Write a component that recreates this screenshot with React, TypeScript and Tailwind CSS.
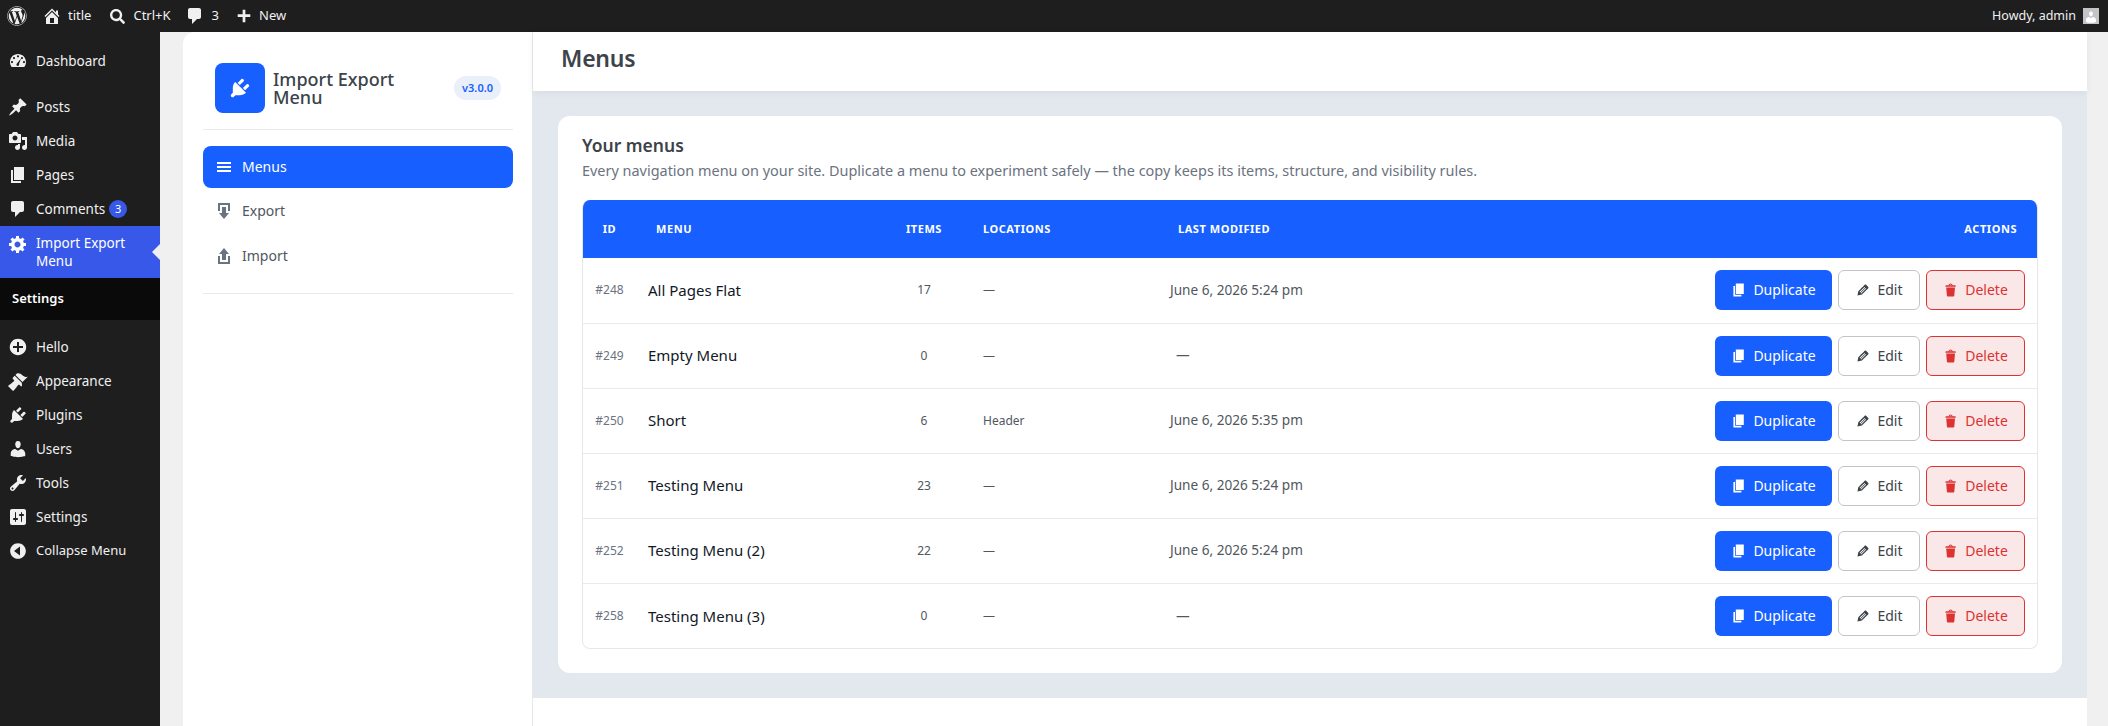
import React from 'react';
import { FaWordpress, FaSearch } from 'react-icons/fa';

type IconProps = { className?: string };

const makeIcon = (d: string) => ({ className }: IconProps) => (
  <svg viewBox="0 0 20 20" className={className} fill="currentColor" fillRule="evenodd">
    <path d={d} />
  </svg>
);

const HomeIcon = makeIcon('M16 8.500l1.530 1.530-1.060 1.060L10 4.620l-6.470 6.470-1.060-1.060L10 2.500l4 4v-2h2v4zm-6-2.460l6 5.990V18H4v-5.970zM12 17v-5H8v5h4z');
const CommentIcon = makeIcon('M5 2h9c1.100 0 2 .9 2 2v7c0 1.100-.9 2-2 2h-2l-5 5v-5H5c-1.100 0-2-.9-2-2V4c0-1.100.9-2 2-2z');
const PlusIcon = makeIcon('M17 7.500v3.500h-5.500V17h-3v-6H3V8h5.500V3h3v5H17z');
const DashboardIcon = makeIcon('M3.760 16h12.480c1.100-1.370 1.760-3.110 1.760-5 0-4.420-3.580-8-8-8s-8 3.580-8 8c0 1.890.66 3.630 1.760 5zM10 4.200a1.100 1.100 0 1 1 0 2.200 1.100 1.100 0 0 1 0-2.200zM6 6a1.100 1.100 0 1 1 0 2.200A1.100 1.100 0 0 1 6 6zm8 0a1.100 1.100 0 1 1 0 2.200A1.100 1.100 0 0 1 14 6zM4 10a1.100 1.100 0 1 1 0 2.200A1.100 1.100 0 0 1 4 10zm12 0a1.100 1.100 0 1 1 0 2.200 1.100 1.100 0 0 1 0-2.200zm-3-2.500l-2 5.500c.5.900-.1 2-1.200 2-1.200 0-1.800-1.200-1.100-2.200L13 7.500z');
const PostIcon = makeIcon('M10.440 3.020l1.820-1.820 6.360 6.350-1.830 1.820c-1.050-.68-2.480-.57-3.410.36l-.75.75c-.92.93-1.040 2.350-.35 3.410l-1.830 1.820-2.410-2.410-2.800 2.790c-.42.42-3.380 2.710-3.800 2.290s1.860-3.390 2.280-3.810l2.790-2.790L4.100 9.360l1.830-1.820c1.050.69 2.480.57 3.400-.36l.75-.75c.93-.92 1.050-2.350.36-3.410z');
const MediaIcon = makeIcon('M13 11V4c0-.55-.45-1-1-1h-1.670L9 1H5L3.670 3H2c-.55 0-1 .45-1 1v7c0 .55.45 1 1 1h10c.55 0 1-.45 1-1zM7 4.500c1.380 0 2.500 1.120 2.500 2.500S8.380 9.500 7 9.500 4.500 8.380 4.500 7 5.620 4.500 7 4.500zM14 6h5v10.500c0 1.380-1.120 2.500-2.500 2.500S14 17.880 14 16.500s1.120-2.500 2.500-2.500c.17 0 .34.020.5.050V9h-3V6zm-4 8.050V13h2v3.500c0 1.380-1.120 2.500-2.500 2.500S7 17.880 7 16.500 8.120 14 9.500 14c.17 0 .34.020.5.050z');
const PagesIcon = makeIcon('M6 15V2h10v13H6zm-1 1h8v2H3V5h2v11z');
const GearIcon = makeIcon('M18 12h-2.180c-.17.7-.44 1.350-.81 1.930l1.540 1.540-2.100 2.100-1.540-1.540c-.58.36-1.230.63-1.910.79V19H8v-2.180c-.68-.16-1.330-.43-1.910-.79l-1.540 1.540-2.120-2.120 1.540-1.540c-.36-.58-.63-1.230-.79-1.910H1V9.030h2.170c.16-.7.44-1.350.8-1.940L2.430 5.550l2.100-2.100 1.540 1.540c.58-.37 1.240-.64 1.930-.81V2h3v2.180c.68.16 1.330.43 1.910.79l1.540-1.540 2.120 2.120-1.540 1.540c.36.59.64 1.240.8 1.940H18V12zm-8.500 1.500c1.660 0 3-1.340 3-3s-1.340-3-3-3-3 1.340-3 3 1.340 3 3 3z');
const HelloIcon = makeIcon('M15.830 4.170c-3.220-3.220-8.440-3.220-11.660 0-3.220 3.220-3.220 8.440 0 11.660 3.220 3.220 8.440 3.220 11.660 0 3.220-3.220 3.220-8.440 0-11.660zM15 11h-4v4H9v-4H5V9h4V5h2v4h4v2z');
const AppearanceIcon = makeIcon('M14.480 11.060L7.410 3.990l1.500-1.500c.5-.56 2.300-.47 3.510.32 1.210.8 1.430 1.280 2.910 2.100 1.180.64 2.450 1.260 4.450.85zm-.71.71L6.700 4.700 4.930 6.470c-.39.39-.39 1.020 0 1.410l1.060 1.060c.39.39.39 1.030 0 1.420-.6.6-1.430 1.110-2.210 1.690-.35.26-.7.53-1.010.84C1.430 13.230 0 15 0 15l5 5s1.770-1.430 2.630-2.820c.31-.31.58-.66.84-1.010.58-.78 1.090-1.610 1.690-2.210.39-.39 1.030-.39 1.420 0l1.060 1.060c.39.39 1.020.39 1.410 0z');
const PluginIcon = makeIcon('M13.110 4.360L9.870 7.600 8 5.730l3.240-3.240c.35-.34 1.050-.2 1.560.32.52.51.66 1.210.31 1.550zm-8 1.770l.91-1.120 9.010 9.010-1.190.84c-.71.71-2.630 1.160-3.820 1.160H6.140L4.900 17.260c-.59.59-1.540.59-2.120 0-.59-.58-.59-1.530 0-2.120l1.240-1.240v-3.880c0-1.130.4-3.190 1.090-3.890zm7.260 3.970l3.240-3.240c.34-.35 1.040-.21 1.550.31.52.51.66 1.210.31 1.550l-3.240 3.250z');
const UsersIcon = makeIcon('M10 9.250c-2.270 0-2.730-3.440-2.730-3.440C7 4.020 7.820 2 9.970 2c2.160 0 2.980 2.020 2.710 3.810 0 0-.41 3.440-2.680 3.440zm0 2.570L12.720 10c2.390 0 4.520 2.330 4.520 4.530v2.490s-3.650 1.130-7.240 1.130c-3.650 0-7.240-1.130-7.240-1.130v-2.490c0-2.250 1.940-4.480 4.470-4.480z');
const ToolsIcon = makeIcon('M16.680 9.770c-1.340 1.340-3.300 1.670-4.950.99l-5.410 6.520c-.99.99-2.590.99-3.580 0s-.99-2.590 0-3.570l6.520-5.420c-.68-1.650-.35-3.610.99-4.950 1.280-1.280 3.120-1.620 4.720-1.060l-2.890 2.890 2.820 2.820 2.860-2.870c.53 1.580.18 3.390-1.080 4.650zM3.810 16.210c.4.39 1.040.39 1.430 0 .4-.4.4-1.040 0-1.430-.39-.4-1.030-.4-1.430 0-.39.39-.39 1.030 0 1.430z');
const SettingsIcon = makeIcon('M18 16V4c0-1.100-.9-2-2-2H4c-1.100 0-2 .9-2 2v12c0 1.100.9 2 2 2h12c1.100 0 2-.9 2-2zM8 11h1c.55 0 1 .45 1 1s-.45 1-1 1H8v1.500c0 .28-.22.5-.5.5s-.5-.22-.5-.5V13H6c-.55 0-1-.45-1-1s.45-1 1-1h1V5.500c0-.28.22-.5.5-.5s.5.22.5.5V11zm5-2h-1c-.55 0-1-.45-1-1s.45-1 1-1h1V5.500c0-.28.22-.5.5-.5s.5.22.5.5V7h1c.55 0 1 .45 1 1s-.45 1-1 1h-1v5.500c0 .28-.22.5-.5.5s-.5-.22-.5-.5V9z');
const CollapseIcon = makeIcon('M10 2.160c4.330 0 7.840 3.510 7.840 7.840s-3.510 7.840-7.840 7.840S2.160 14.330 2.160 10 5.670 2.160 10 2.160zM12 14.500v-9L6 10z');
const ExportIcon = makeIcon('M14.010 4v6h2V2H4v8h2.010V4h8zm-2.010 2v6h3l-5 6-5-6h3V6h4z');
const ImportIcon = makeIcon('M8 14V8H5l5-6 5 6h-3v6H8zm-2 2v-6H4v8h12.010v-8H14v6H6z');
const MenuLines = makeIcon('M17 7V5H3v2h14zm0 4V9H3v2h14zm0 4v-2H3v2h14z');
const PencilIcon = makeIcon('M13.890 3.390l2.710 2.720c.46.46.42 1.240.03 1.640l-8.010 8.020-5.560 1.160 1.160-5.580s7.600-7.630 7.990-8.030c.39-.39 1.220-.39 1.680.07zM12 6.100l-6.200 6.200.7.700 6.200-6.200zm1.300 1.300l-6.200 6.200.7.700 6.200-6.200z');
const TrashIcon = makeIcon('M12 4h3c.6 0 1 .4 1 1v1H3V5c0-.6.5-1 1-1h3c.2-1.100 1.300-2 2.500-2s2.300.9 2.500 2zM8 4h3c-.2-.6-.9-1-1.500-1S8.200 3.400 8 4zM4 7h11l-.9 10.100c0 .5-.5.9-1 .9H5.900c-.5 0-.9-.4-1-.9L4 7z');

const sideTop = [
  { label: 'Posts', Icon: PostIcon },
  { label: 'Media', Icon: MediaIcon },
  { label: 'Pages', Icon: PagesIcon },
];

const sideBottom = [
  { label: 'Hello', Icon: HelloIcon },
  { label: 'Appearance', Icon: AppearanceIcon },
  { label: 'Plugins', Icon: PluginIcon },
  { label: 'Users', Icon: UsersIcon },
  { label: 'Tools', Icon: ToolsIcon },
  { label: 'Settings', Icon: SettingsIcon },
];

const menus = [
  { id: '#248', name: 'All Pages Flat', items: 17, location: '—', date: 'June 6, 2026 5:24 pm' },
  { id: '#249', name: 'Empty Menu', items: 0, location: '—', date: '' },
  { id: '#250', name: 'Short', items: 6, location: 'Header', date: 'June 6, 2026 5:35 pm' },
  { id: '#251', name: 'Testing Menu', items: 23, location: '—', date: 'June 6, 2026 5:24 pm' },
  { id: '#252', name: 'Testing Menu (2)', items: 22, location: '—', date: 'June 6, 2026 5:24 pm' },
  { id: '#258', name: 'Testing Menu (3)', items: 0, location: '—', date: '' },
];

const SideItem = ({ label, icon, children }: { label: string; icon: React.ReactNode; children?: React.ReactNode }) => (
  <div className="flex items-center h-[34px] text-[#f0f0f1] text-[13.5px]">
    <span className="w-9 flex justify-center shrink-0">{icon}</span>
    <span>{label}</span>
    {children}
  </div>
);

const AdminBar = () => (
  <div className="h-8 bg-[#1e1e1e] text-[#f0f0f1] text-[13px] flex items-center justify-between shrink-0">
    <div className="flex items-center">
      <FaWordpress className="w-5 h-5 ml-[7px] mr-[15px]" />
      <HomeIcon className="w-5 h-5 mr-[6px]" />
      <span className="mr-[19px]">title</span>
      <FaSearch className="w-[15px] h-[15px] mr-2" />
      <span className="mr-[14px]">Ctrl+K</span>
      <CommentIcon className="w-5 h-5 mr-[7px]" />
      <span className="mr-4">3</span>
      <PlusIcon className="w-[18px] h-[18px] mr-[6px]" />
      <span>New</span>
    </div>
    <div className="flex items-center pr-[9px] text-[12.5px]">
      <span>Howdy, admin</span>
      <span className="ml-[7px] w-4 h-4 bg-[#c3c4c7] flex items-end justify-center overflow-hidden">
        <UsersIcon className="w-[14px] h-[14px] text-white" />
      </span>
    </div>
  </div>
);

const Sidebar = () => (
  <aside className="w-40 bg-[#1e1e1e] shrink-0 pt-3">
    <SideItem label="Dashboard" icon={<DashboardIcon className="w-5 h-5" />} />
    <div className="h-3" />
    {sideTop.map(({ label, Icon }) => (
      <SideItem key={label} label={label} icon={<Icon className="w-5 h-5" />} />
    ))}
    <SideItem label="Comments" icon={<CommentIcon className="w-5 h-5" />}>
      <span className="ml-1 w-[18px] h-[18px] rounded-full bg-[#3858e9] text-white text-[11px] flex items-center justify-center">3</span>
    </SideItem>
    <div className="relative bg-[#3858e9] h-[52px] flex items-center text-white text-[13.5px] leading-[18px]">
      <span className="w-9 flex justify-center shrink-0 self-start pt-[8px]">
        <GearIcon className="w-5 h-5" />
      </span>
      <span>Import Export<br />Menu</span>
      <span className="absolute right-0 top-[18px] border-y-[8px] border-y-transparent border-r-[8px] border-r-[#f0f0f1]" />
    </div>
    <div className="h-[42px] bg-[#0a0a0a] flex items-center pl-3 text-[13px] font-semibold text-white">Settings</div>
    <div className="h-[10px]" />
    {sideBottom.map(({ label, Icon }) => (
      <SideItem key={label} label={label} icon={<Icon className="w-5 h-5" />} />
    ))}
    <div className="flex items-center h-[34px] text-[#f0f0f1] text-[13px]">
      <span className="w-9 flex justify-center shrink-0"><CollapseIcon className="w-5 h-5" /></span>
      <span>Collapse Menu</span>
    </div>
  </aside>
);

const PluginNav = () => (
  <nav className="w-[350px] shrink-0 bg-white border-r border-[#e5e7eb] rounded-tl-[12px] pl-5 pr-[19px]">
    <div className="h-[98px] flex items-end pb-4 pl-3 pr-3 border-b border-[#e8eaed]">
      <div className="w-[50px] h-[50px] rounded-lg bg-[#175fff] flex items-center justify-center shrink-0">
        <PluginIcon className="w-6 h-6 text-white" />
      </div>
      <div className="ml-2 flex-1 self-center mt-[30px] text-[18px] leading-[18px] font-medium text-[#3c434a]">Import Export<br />Menu</div>
      <span className="mb-[13px] h-6 px-2 rounded-full bg-[#e9f0f9] text-[#175fff] text-[11px] font-semibold flex items-center">v3.0.0</span>
    </div>
    <div className="pt-4 pb-[15px] border-b border-[#e8eaed] text-sm text-[#50575e]">
      <div className="h-[42px] rounded-lg bg-[#175fff] text-white flex items-center pl-[11px] gap-2">
        <MenuLines className="w-5 h-5" />
        Menus
      </div>
      <div className="h-[46px] flex items-center pl-[11px] gap-2">
        <ExportIcon className="w-5 h-5 text-[#6b7280]" />
        Export
      </div>
      <div className="h-[44px] flex items-center pl-[11px] gap-2">
        <ImportIcon className="w-5 h-5 text-[#6b7280]" />
        Import
      </div>
    </div>
  </nav>
);

const Actions = () => (
  <div className="flex justify-end gap-[6px] pr-3 text-sm">
    <button className="h-10 w-[117px] rounded-md bg-[#175fff] text-white flex items-center justify-center gap-[6px]">
      <PagesIcon className="w-4 h-4" />
      Duplicate
    </button>
    <button className="h-10 w-[82px] rounded-md bg-white border border-[#c3c4c7] text-[#3c434a] flex items-center justify-center gap-[6px]">
      <PencilIcon className="w-4 h-4" />
      Edit
    </button>
    <button className="h-10 w-[99px] rounded-md bg-[#fae7e7] border border-[#dc3232] text-[#dc3232] flex items-center justify-center gap-[6px]">
      <TrashIcon className="w-4 h-4" />
      Delete
    </button>
  </div>
);

const MenusTable = () => (
  <div className="mt-[19px] mx-6 rounded-lg border border-[#e5e7eb] border-t-0 overflow-hidden">
    <table className="w-full table-fixed border-collapse">
      <thead>
        <tr className="h-[58px] bg-[#175fff] text-white text-[11px] font-bold uppercase tracking-[0.05em] text-left">
          <th className="w-[53px] text-center font-bold">ID</th>
          <th className="w-[248px] pl-5 font-bold">Menu</th>
          <th className="w-20 text-center font-bold">Items</th>
          <th className="w-[194px] pl-[19px] font-bold">Locations</th>
          <th className="w-[300px] pl-5 font-bold">Last Modified</th>
          <th className="pr-5 text-right font-bold">Actions</th>
        </tr>
      </thead>
      <tbody>
        {menus.map((m, i) => (
          <tr key={m.id} className={`h-[65px] ${i > 0 ? 'border-t border-[#e8eaed]' : ''}`}>
            <td className="text-center text-xs text-[#6b7280]">{m.id}</td>
            <td className="pl-3 text-[15px] text-[#111827]">{m.name}</td>
            <td className="text-center text-xs text-[#50575e]">{m.items}</td>
            <td className="pl-[19px] text-xs text-[#50575e]">{m.location}</td>
            <td className={`text-[13.6px] text-[#50575e] ${m.date ? 'pl-3' : 'pl-[18px]'}`}>{m.date || '—'}</td>
            <td><Actions /></td>
          </tr>
        ))}
      </tbody>
    </table>
  </div>
);

export default function App() {
  return (
    <div className="h-[726px] w-full overflow-hidden flex flex-col bg-[#f0f0f1] font-['Noto_Sans',sans-serif]">
      <AdminBar />
      <div className="flex flex-1 min-h-0">
        <Sidebar />
        <div className="flex flex-1 pl-[23px] pr-[21px] min-w-0">
          <PluginNav />
          <main className="flex-1 min-w-0 bg-[#e3e7ee] flex flex-col">
            <div className="h-[59px] bg-white shadow-[0_2px_8px_rgba(0,0,0,0.05)] flex items-center pl-7 pb-[6px] text-[23px] tracking-[-0.01em] font-semibold text-[#3c434a] shrink-0">Menus</div>
            <div className="mt-[25px] mx-[25px] h-[557px] bg-white rounded-xl shrink-0 pt-[19px]">
              <h2 className="px-6 text-[17.5px] leading-5 font-semibold text-[#3c434a]">Your menus</h2>
              <p className="px-6 mt-[6px] text-[14.45px] leading-5 text-[#6b7280]">Every navigation menu on your site. Duplicate a menu to experiment safely — the copy keeps its items, structure, and visibility rules.</p>
              <MenusTable />
            </div>
            <div className="mt-[25px] flex-1 bg-white" />
          </main>
        </div>
      </div>
    </div>
  );
}
